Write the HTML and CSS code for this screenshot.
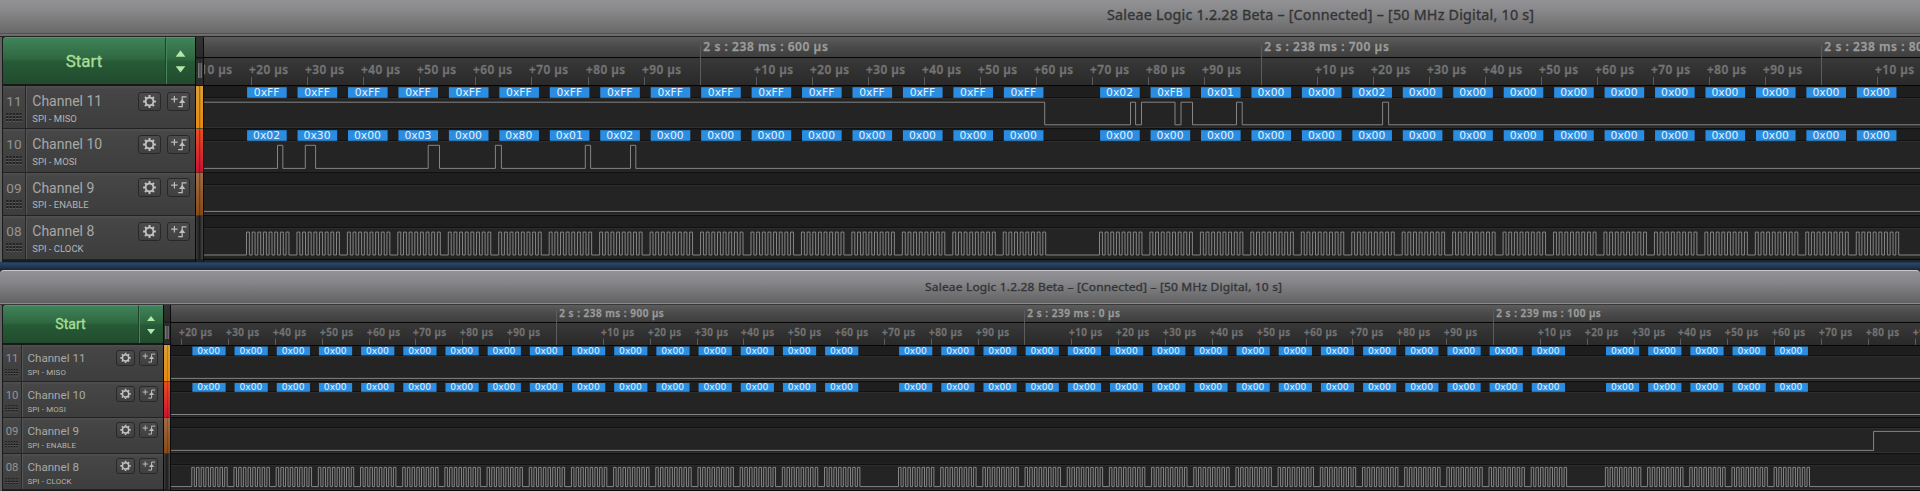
FILE: index.html
```html
<!DOCTYPE html>
<html lang="en">
<head>
<meta charset="utf-8">
<title>Saleae Logic 1.2.28 Beta</title>
<link rel="stylesheet" href="styles.css">
</head>
<body>
<main class="screen">
  <section class="window window-large" id="large"></section>
  <div class="desktop-gap"></div>
  <section class="window window-small" id="small"></section>
</main>
<script src="app.js"></script>
</body>
</html>
```

FILE: styles.css
```css
* { box-sizing: border-box; }
body { margin: 0; background: #242424; overflow: hidden; font-family: Roboto, "Liberation Sans", sans-serif; }
.screen { display: flex; flex-direction: column; width: 1920px; height: 491px; overflow: hidden; }

.window { display: flex; flex-direction: column; flex: none; background: #222; }
.window-large { height: 262px; --frame: 37px; --body: 225px; --side: 192px; --gut: 9px; --start: 49px; --row: 43.4px; --num: 23px; --k: 1; --drop: 31px; --step: 30px; }
.window-small { height: 221px; --frame: 35px; --body: 186px; --side: 160px; --gut: 8px; --start: 40.4px; --row: 36.15px; --num: 19px; --k: .832; --drop: 27px; --step: 25px; }

.desktop-gap { flex: none; height: 8px; background: linear-gradient(#1d2f47, #24476f 15%, #223a59 50%, #20252e); }

.titlebar { flex: none; height: var(--frame); background: linear-gradient(#929294, #8a8a8c 25%, #69696a 88%, #505050 89%, #505050 92%, #747474 92%, #666 97%, #252525 97%); }
.window-small .titlebar { border-top: 1px solid #c8c8ca; border-radius: 4px 4px 0 0; background: linear-gradient(#929297, #858588 35%, #626263 93%, #8a8a8a 93%, #8a8a8a 97%, #383838 97%); }
.titlebar svg { display: block; width: 100%; height: 100%; }

.body { display: flex; height: var(--body); padding-left: 3px; background: linear-gradient(90deg, #626262 0, #626262 2px, #1b1b1b 2px); }
.side { flex: none; width: var(--side); }
.start { display: flex; height: var(--start); border-bottom: 2px solid #191919; }
.start-main { display: flex; align-items: center; justify-content: center; flex: 1; padding-bottom: 1px; background: linear-gradient(#40835a, #2f6840 45%, #265a36 52%, #224b2e); border-top: 1px solid #529569; border-top-left-radius: 3px; color: #a6df96; font-size: calc(17px * var(--k)); -webkit-text-stroke: .35px #a6df96; }
.start-step { display: flex; flex: none; width: var(--step); border-left: 1px solid #1d4429; border-top: 1px solid #529569; background: linear-gradient(#40835a, #2f6840 45%, #265a36 52%, #224b2e); box-shadow: inset 1px 0 #47855a; }
.start-step svg { width: 100%; height: 100%; }

.channel { display: flex; height: var(--row); background: linear-gradient(#505050, #464646 8%, #3d3d3d); border-bottom: 1px solid #222; }
.channel-num { flex: none; width: var(--num); border-right: 1px solid #282828; color: #949494; font-size: calc(13.6px * var(--k)); text-align: center; line-height: var(--drop); }
.channel-num svg { display: block; width: calc(16px * var(--k)); height: calc(9px * var(--k)); margin: calc(-4px * var(--k)) auto 0; }
.channel-text { flex: 1; min-width: 0; padding-left: calc(5.3px * var(--k)); border-left: 1px solid #555; white-space: nowrap; color: #a8a8a8; }
.channel-name { font-size: calc(14px * var(--k)); line-height: var(--drop); }
.channel-role { font-size: calc(9.5px * var(--k)); line-height: calc(10px * var(--k)); margin-top: calc(-3.5px * var(--k)); color: #b4b4b4; }
.window-small .channel-role { letter-spacing: .15px; }
.channel-tools { display: flex; flex: none; gap: calc(5.5px * var(--k)); padding: calc(5.5px * var(--k)) calc(5.5px * var(--k)) 0 0; }
.tool { display: flex; width: calc(23px * var(--k)); height: calc(19px * var(--k)); border: 1px solid #282828; border-radius: 3px; background: linear-gradient(#4b4b4b, #404040); }
.tool svg { width: 100%; height: 100%; }

.gutter { flex: none; width: var(--gut); background: #222; border-left: 1px solid #080808; border-right: 1px solid #0c0c0c; }
.gutter-top { display: flex; align-items: flex-end; justify-content: center; height: var(--start); padding-bottom: calc(7px * var(--k)); border-bottom: 1px solid #111; background: linear-gradient(#333 0, #292929 42%, #0a0a0a 43%, #2c2c2c 46%); }
.grip { width: 4px; height: calc(15px * var(--k)); background: linear-gradient(90deg, #888, #444 50%, #777); }
.strip { height: var(--row); border-bottom: 1px solid rgba(20, 20, 20, .6); }
.c11 { background: linear-gradient(90deg, transparent 45%, rgba(90, 50, 0, .45) 50%, transparent 70%), linear-gradient(#d9a035, #e88a10); }
.c10 { background: linear-gradient(90deg, transparent 45%, rgba(90, 0, 0, .4) 50%, transparent 70%), linear-gradient(#e8501f, #cc1238); }
.c9 { background: linear-gradient(90deg, transparent 45%, rgba(50, 20, 0, .4) 50%, transparent 70%), linear-gradient(#a06c48, #8a4a14); }
.c8 { background: linear-gradient(90deg, #3c3c3c, #1c1c1c 50%, #484848); }

.plot { flex: 1; min-width: 0; background: #242424; }
.plot svg { display: block; width: 100%; height: 100%; }

.t-title { font-family: "Noto Sans", "DejaVu Sans", sans-serif; fill: #343436; stroke: #343436; stroke-width: .35px; }
.t-major, .t-minor { font-family: "Noto Sans", "DejaVu Sans", sans-serif; font-weight: 600; stroke-width: .3px; }
.t-major { fill: #9c9c9c; stroke: #9c9c9c; }
.t-minor { fill: #747474; stroke: #747474; }
.t-byte { font-family: "DejaVu Sans", sans-serif; fill: #e4f1fd; text-anchor: middle; }
.byte { fill: #2a8de2; }
.wave { fill: none; stroke: #858585; stroke-width: 1; }
.clock { fill: none; stroke: #858585; stroke-width: 1; }
.tick { stroke: #5c5c5c; stroke-width: 1; }
```

FILE: app.js
```js
const gear = `<svg viewBox="0 0 21 17"><g fill="none" stroke="#c4c4c4"><circle cx="10.5" cy="8.5" r="3.9" stroke-width="1.8"/><g stroke-width="2"><path d="M10.5 2.1v2M10.5 12.9v2M4.1 8.5h2M14.9 8.5h2M6 4l1.4 1.4M13.6 11.6l1.4 1.4M6 13l1.4-1.4M13.6 5.4l1.4-1.4"/></g></g></svg>`;
const edge = `<svg viewBox="0 0 21 17"><g fill="none" stroke="#bcbcbc" stroke-width="1.2"><path d="M3.2 6.2h6.4M6.4 3v6.4M18.5 3.8h-4.3v9.9h-4"/></g><path d="M11 10h6.4l-3.2-4z" fill="#bcbcbc"/></svg>`;
const arrows = `<svg viewBox="0 0 30 47"><path d="M15 12.5l5 6.5h-10zM15 35.5l-5-6.5h10z" fill="#b5e8a8"/></svg>`;
let gripDots = '';
for (let r = 0; r < 3; r++) for (let c = 0; c < 5; c++)
  gripDots += `<rect x="${c * 3.3 + .4}" y="${r * 3 + .3}" width="1.9" height="1.6" fill="#151515"/><rect x="${c * 3.3 + .4}" y="${r * 3 + 1.9}" width="1.9" height=".8" fill="#6a6a6a"/>`;
const dots = `<svg viewBox="0 0 16 9">${gripDots}</svg>`;

const channels = [['11', 'Channel 11', 'SPI - MISO'], ['10', 'Channel 10', 'SPI - MOSI'], ['09', 'Channel 9', 'SPI - ENABLE'], ['08', 'Channel 8', 'SPI - CLOCK']];
const zeros = n => Array(n).fill('00');

const large = {
  x0: 204, top: 37, bottom: 262, titleTop: 0, titleH: 37, title: [1107, 19.6, 427, 14.3],
  split: 57.5, rulerEnd: 85.5, seps: [128.7, 172.2, 215.6, 259], laneH: 12,
  tick0: 139.4, tick: 56.08, majors: { 0: '', 10: '2 s : 238 ms : 600 µs', 20: '2 s : 238 ms : 700 µs', 30: '2 s : 238 ms : 800 µs' },
  majorY: 50.8, majorW: 124.5, majorF: 12, minorY: 73.6, minorW: 39, minorF: 11.8, tickTop: 77,
  groups: [[247.1, 16], [1100.1, 16]], pitch: 50.45, byteW: 39.6, byteY: [87.2, 130.2], byteH: 10.6, byteF: 10.6, textW: 27,
  data: [
    [...Array(16).fill('FF'), '02', 'FB', '01', '00', '00', '02', ...zeros(10)],
    ['02', '30', '00', '03', '00', '80', '01', '02', ...zeros(24)]
  ],
  waves: [
    [102.2, 124.8, 1, [1044.7, 1130.5, 1135.6, 1141.5, 1175, 1181, 1192.5, 1236.5, 1242.2, 1382.6, 1388.6]],
    [145.3, 168.4, 0, [277.5, 282.8, 305.3, 315.6, 428.2, 439.5, 495.4, 501.4, 585.3, 590.6, 630.5, 635.8]],
    [188, 211.4, 0, []]
  ],
  clock: [232.1, 255, 5.65, 2.9]
};
const small = {
  x0: 171, top: 305, bottom: 491, titleTop: 270, titleH: 35, title: [925, 290.6, 357, 12],
  split: 322.5, rulerEnd: 345.4, seps: [381.4, 417.6, 453.7, 490.4], laneH: 10.3,
  tick0: 87.95, tick: 46.85, majors: { 0: '', 10: '2 s : 238 ms : 900 µs', 20: '2 s : 239 ms : 0 µs', 30: '2 s : 239 ms : 100 µs' },
  majorY: 316.9, majorW: 104.5, majorF: 10, minorY: 335.8, minorW: 33, minorF: 9.9, tickTop: 338.5,
  groups: [[192.4, 16], [899.1, 16], [1606, 5]], pitch: 42.18, byteW: 33.2, byteY: [346.6, 383], byteH: 8.8, byteF: 8.9, textW: 22.8,
  data: [zeros(37), zeros(37)],
  waves: [[359.5, 378.4, 0, []], [395, 414.5, 0, []], [431.4, 450.4, 0, [1873.6]]],
  clock: [467.4, 486.6, 4.7, 2.5]
};

function text(cls, x, y, size, width, str, adjust = 'spacingAndGlyphs') {
  return `<text class="${cls}" x="${x}" y="${y}" font-size="${size}" textLength="${width}" lengthAdjust="${adjust}">${str}</text>`;
}

function plot(c) {
  const right = 1920, w = right - c.x0;
  let s = `<svg viewBox="${c.x0} ${c.top} ${w} ${c.bottom - c.top}" preserveAspectRatio="none">
  <defs><linearGradient id="a${c.x0}" x2="0" y2="1"><stop stop-color="#5c5c5c"/><stop offset=".5" stop-color="#494949"/><stop offset="1" stop-color="#3e3e3e"/></linearGradient>
  <linearGradient id="b${c.x0}" x2="0" y2="1"><stop stop-color="#393939"/><stop offset="1" stop-color="#292929"/></linearGradient></defs>
  <rect x="${c.x0}" y="${c.top}" width="${w}" height="${c.split - c.top}" fill="url(#a${c.x0})"/>
  <rect x="${c.x0}" y="${c.split}" width="${w}" height="${c.rulerEnd - c.split}" fill="url(#b${c.x0})"/>
  <path d="M${c.x0} ${c.split}H${right}M${c.x0} ${Math.floor(c.rulerEnd) + .5}H${right}" stroke="#050505"/>`;
  for (let k = 1; c.tick0 + k * c.tick < right + 3; k++) {
    const x = Math.floor(c.tick0 + k * c.tick) + .5;
    if (k % 10 === 0) {
      const label = c.majors[k];
      const mw = label.includes(': 0 ') ? c.majorW * .886 : c.majorW;
      s += `<path class="tick" d="M${x} ${c.split - 12}V${c.rulerEnd - .5}"/>` + text('t-major', x + 2.8, c.majorY, c.majorF, mw, label, 'spacing');
    } else {
      s += `<path class="tick" d="M${x} ${c.tickTop}V${c.rulerEnd - .5}"/>` + text('t-minor', x - 2.4, c.minorY, c.minorF, c.minorW, `+${k % 10}0 µs`, 'spacing');
    }
  }
  let y = c.rulerEnd;
  for (const sep of c.seps) {
    s += `<rect x="${c.x0}" y="${y + .5}" width="${w}" height="${c.laneH - 1}" fill="#1e1e1e"/>
    <path d="M${c.x0} ${Math.floor(y + c.laneH) + .5}H${right}" stroke="#111"/><path d="M${c.x0} ${Math.floor(y + c.laneH) + 1.5}H${right}" stroke="#2d2d2d"/>
    <path d="M${c.x0} ${Math.floor(sep) - .5}H${right}" stroke="#303030"/><path d="M${c.x0} ${sep + .3}H${right}" stroke="#0b0b0b" stroke-width="1.6"/>`;
    y = sep;
  }
  const starts = c.groups.flatMap(([x, n]) => Array.from({ length: n }, (_, i) => x + i * c.pitch));
  c.data.forEach((row, r) => row.forEach((v, i) => {
    const bx = starts[i];
    s += `<rect class="byte" x="${bx}" y="${c.byteY[r]}" width="${c.byteW}" height="${c.byteH}"/>` +
      text('t-byte', bx + c.byteW / 2 - .3, c.byteY[r] + c.byteH * .8, c.byteF, v.startsWith('F') ? c.textW * .95 : c.textW, '0x' + v);
  }));
  for (const [hi, lo, start, edges] of c.waves) {
    let level = start, d = `M${c.x0} ${level ? hi : lo}`;
    for (const x of edges) { level = 1 - level; d += `H${x}V${level ? hi : lo}`; }
    s += `<path class="wave" d="${d}H${right}"/>`;
  }
  const [hi, lo, period, width] = c.clock;
  let d = `M${c.x0} ${lo}`;
  for (const b of starts) for (let i = 0; i < 8; i++) {
    const x = b - .6 + i * period;
    d += `H${x.toFixed(2)}V${hi}H${(x + width).toFixed(2)}V${lo}`;
  }
  return s + `<path class="clock" d="${d}H${right}"/></svg>`;
}

function render(id, c) {
  const [tx, ty, tw, tf] = c.title;
  document.getElementById(id).innerHTML = `
  <header class="titlebar"><svg viewBox="0 ${c.titleTop} 1920 ${c.titleH}" preserveAspectRatio="none">${text('t-title', tx, ty, tf, tw, 'Saleae Logic 1.2.28 Beta – [Connected] – [50 MHz Digital, 10 s]', 'spacing')}</svg></header>
  <div class="body">
    <aside class="side">
      <div class="start"><div class="start-main">Start</div><div class="start-step">${arrows}</div></div>
      ${channels.map(([n, name, role]) => `<div class="channel"><div class="channel-num">${n}${dots}</div><div class="channel-text"><div class="channel-name">${name}</div><div class="channel-role">${role}</div></div><div class="channel-tools"><span class="tool">${gear}</span><span class="tool">${edge}</span></div></div>`).join('')}
    </aside>
    <div class="gutter"><div class="gutter-top"><div class="grip"></div></div>${[11, 10, 9, 8].map(n => `<div class="strip c${n}"></div>`).join('')}</div>
    <div class="plot">${plot(c)}</div>
  </div>`;
}
render('large', large);
render('small', small);
```
